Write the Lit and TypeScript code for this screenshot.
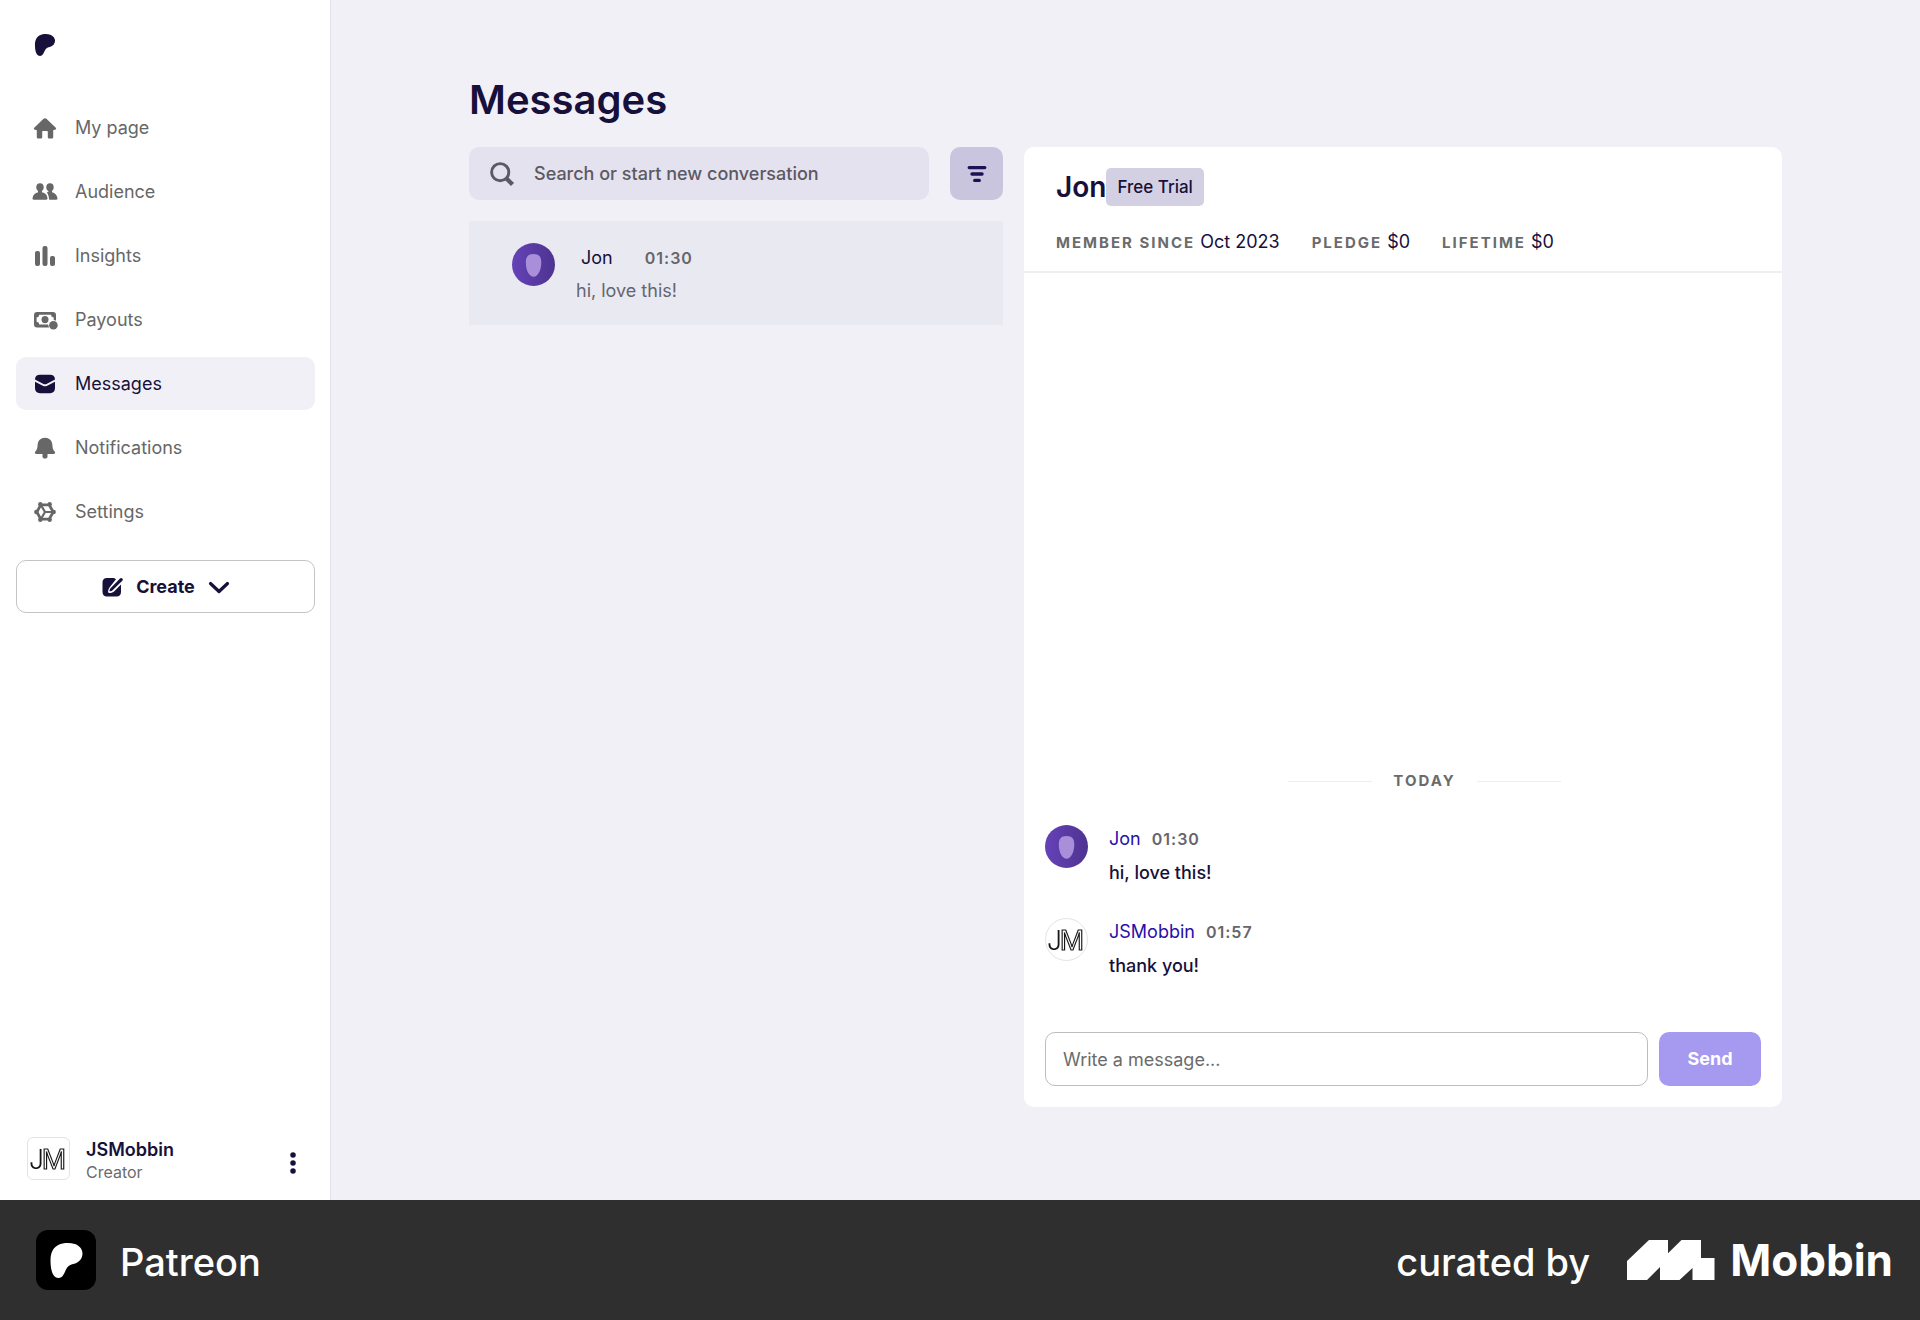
import { LitElement, html, css, svg } from "lit";
import { customElement, property } from "lit/decorators.js";
import { classMap } from "lit/directives/class-map.js";

const PATREON_MARK =
  "M22.957 7.21c-.004-3.064-2.391-5.576-5.191-6.482-3.478-1.125-8.064-.962-11.384.604C2.357 3.231 1.093 7.391 1.046 11.54c-.039 3.411.302 12.396 5.369 12.46 3.765.047 4.326-4.804 6.068-7.141 1.24-1.662 2.836-2.132 4.801-2.618 3.376-.836 5.678-3.501 5.673-7.031Z";

const icons = {
  home: svg`<path d="M12 2.200c.6 0 1.200.3 1.700.7l9.100 8.900c.6.6.4 1.500-.3 1.800l-2.300.7v6.600c0 1-.7 1.600-1.600 1.600h-2.300c-.9 0-1.500-.6-1.500-1.600v-5c0-.6-.4-1-1-1h-3.600c-.6 0-1 .4-1 1v5c0 1-.6 1.600-1.500 1.600H5.400c-.9 0-1.600-.6-1.600-1.600v-6.600l-2.300-.7c-.7-.3-.9-1.200-.3-1.800l9.100-8.900c.5-.4 1.100-.7 1.700-.7Z"/>`,
  audience: svg`<ellipse cx="7" cy="7.300" rx="3.700" ry="4"/><path d="M5 10h4v3H5zM-.5 18.600c.3-3.700 2.600-5.600 5.700-6.300h3.600c3.200.7 5.500 2.600 5.700 6.300 0 .7-.4 1.200-1.100 1.200H.6c-.7 0-1.100-.5-1.100-1.200Z"/><ellipse cx="17" cy="7.300" rx="3.700" ry="4"/><path d="M14 12.400c0-.5 1-.4 1.500-1l.5-2h3v2.900c3 .8 5.200 3 5.500 6.300 0 .7-.4 1.200-1.100 1.200h-6.700c-.6 0-.8-.3-.7-.8-.1-3.600-1.200-4.700-2-6.600Z"/>`,
  insights: svg`<rect x="2" y="7" width="5" height="15" rx="2"/><rect x="9.500" y="2" width="5" height="20" rx="2"/><rect x="17" y="12" width="5" height="10" rx="2"/>`,
  payouts: svg`<path fill-rule="evenodd" d="M4 4h16a3 3 0 0 1 3 3v5.700a5 5 0 0 0-2.300-.8V9.500A3 3 0 0 1 18 6.700H6.300a3 3 0 0 1-2.700 2.800v4.200a3 3 0 0 1 2.700 2.800h8.900a5 5 0 0 0 1 3H4a3 3 0 0 1-3-3V7a3 3 0 0 1 3-3Z"/><ellipse cx="12" cy="11.600" rx="3.500" ry="3.700"/><circle cx="20.400" cy="17.300" r="4.300"/>`,
  messages: svg`<path d="M7 2.800h10c3.300 0 5 1.700 5 4.700l-8.500 4.400c-1 .5-2 .5-3 0L2 7.500c0-3 1.700-4.700 5-4.700Z"/><path d="m2 9.700 7.800 4c1.500.8 2.900.8 4.400 0l7.800-4V16c0 3.300-1.700 5.200-5 5.200H7c-3.300 0-5-1.900-5-5.200Z"/>`,
  bell: svg`<path d="M12 1.800c4.300 0 7.200 3 7.400 7.200.1 3 .6 4.600 2.300 6.600.8 1 .3 2.500-1.100 2.500h-6.100v2.300c0 1.300-1 2.100-2.500 2.100s-2.500-.8-2.500-2.100v-2.300H3.400c-1.400 0-1.900-1.500-1.100-2.500 1.700-2 2.200-3.600 2.300-6.600.2-4.200 3.100-7.200 7.400-7.200Z"/>`,
  settings: svg`<path d="M7.800 4.900h8.400L20.200 12l-4 7.100H7.800L3.800 12Z" fill="none" stroke="currentColor" stroke-width="2.800"/><g><circle cx="20.700" cy="12" r="2.200"/><circle cx="3.300" cy="12" r="2.200"/><circle cx="16.700" cy="4.300" r="2.200"/><circle cx="7.300" cy="4.300" r="2.200"/><circle cx="16.700" cy="19.700" r="2.200"/><circle cx="7.300" cy="19.700" r="2.200"/></g><path d="M12 12h7M12 12 8.500 6M12 12l-3.500 6" fill="none" stroke="currentColor" stroke-width="2.200"/>`,
  compose: svg`<path d="M14 3H7Q2.500 3 2.500 7.500v9.300Q2.500 21.500 7 21.500h9.500q4.500 0 4.500-4.700V9.500l-6.700 6.800c-1 1-3 1.800-4.700 1.800-1.200 0-1.600-.8-1.500-1.800.2-1.800.900-3.400 2-4.500L16 4.200Z"/><path d="M9.500 16.300c-.1-1.500.5-2.600 1.500-3.600L20 3.400c.7-.7 1.600-.7 2.300 0s.7 1.600 0 2.300l-9.200 9.100c-1 1-2.100 1.500-3.600 1.500Z"/>`,
  chevron: svg`<path d="m3.500 8.500 8.500 8 8.500-8" fill="none" stroke="currentColor" stroke-width="3.200" stroke-linecap="round" stroke-linejoin="round"/>`,
  search: svg`<circle cx="10.200" cy="10.200" r="8.600" fill="none" stroke="currentColor" stroke-width="2.900"/><path d="m16 16 6.500 6.500" fill="none" stroke="currentColor" stroke-width="4.400"/>`,
  filter: svg`<path d="M3.500 5h17M6.500 12h11M9.500 19h5" fill="none" stroke="currentColor" stroke-width="3.600" stroke-linecap="round"/>`,
  dots: svg`<circle cx="12" cy="3.300" r="3"/><circle cx="12" cy="12" r="3"/><circle cx="12" cy="20.700" r="3"/>`,
  patreon: svg`<path d=${PATREON_MARK}/>`,
};

type IconName = keyof typeof icons;

@customElement("ui-icon")
export class UiIcon extends LitElement {
  @property() name: IconName = "home";

  static styles = css`
    :host {
      display: inline-flex;
      flex: none;
      width: 24px;
      height: 24px;
    }
    .glyph {
      width: 100%;
      height: 100%;
      fill: currentColor;
      overflow: visible;
    }
  `;

  render() {
    return html`<svg class="glyph" viewBox="0 0 24 24" aria-hidden="true">${icons[this.name]}</svg>`;
  }
}

@customElement("user-avatar")
export class UserAvatar extends LitElement {
  @property() kind: "member" | "creator" = "member";
  @property({ type: Boolean }) square = false;

  static styles = css`
    :host {
      display: block;
      flex: none;
      width: 43px;
      height: 43px;
    }
    .frame {
      box-sizing: border-box;
      width: 100%;
      height: 100%;
      overflow: hidden;
      border-radius: 50%;
    }
    .member {
      background: linear-gradient(90deg, #6542b8, #4e3390);
    }
    .creator {
      background: #fff;
      border: 1px solid #e3e3e6;
    }
    .square {
      border-radius: 6px;
    }
    .art {
      display: block;
      width: 100%;
      height: 100%;
      will-change: transform;
    }
    .j {
      font: 300 27px "Inter", sans-serif;
      fill: #161616;
    }
    .m {
      font: 400 30px "Liberation Sans Narrow", "Liberation Sans", sans-serif;
      fill: #fff;
      stroke: #161616;
      stroke-width: 1.2;
    }
  `;

  render() {
    const frame = { frame: true, [this.kind]: true, square: this.square };
    return html`<div class=${classMap(frame)}>
      <svg class="art" viewBox="0 0 42 42" aria-hidden="true">
        ${this.kind === "member"
          ? svg`<path fill="#a98fd9" d="M21 10.800c5.500 0 7.600 2.700 7.600 8.200 0 7-3 13.900-7.400 13.900-4.500 0-7.700-6.300-7.700-13.600 0-5.300 2-8.500 7.500-8.500Z"/>`
          : svg`<text class="j" x="1" y="31.500">J</text><text class="m" x="14" y="31.500">M</text>`}
      </svg>
    </div>`;
  }
}

interface NavItem {
  label: string;
  icon: IconName;
  active?: boolean;
}

interface ChatMessage {
  author: string;
  kind: "member" | "creator";
  time: string;
  text: string;
}

const NAV: NavItem[] = [
  { label: "My page", icon: "home" },
  { label: "Audience", icon: "audience" },
  { label: "Insights", icon: "insights" },
  { label: "Payouts", icon: "payouts" },
  { label: "Messages", icon: "messages", active: true },
  { label: "Notifications", icon: "bell" },
  { label: "Settings", icon: "settings" },
];

const FACTS = [
  { label: "MEMBER SINCE", value: "Oct 2023" },
  { label: "PLEDGE", value: "$0" },
  { label: "LIFETIME", value: "$0" },
];

const THREAD: ChatMessage[] = [
  { author: "Jon", kind: "member", time: "01:30", text: "hi, love this!" },
  { author: "JSMobbin", kind: "creator", time: "01:57", text: "thank you!" },
];

@customElement("app-root")
export class AppRoot extends LitElement {
  static styles = css`
    :host {
      display: grid;
      grid-template-rows: 1fr 120px;
      min-height: 100vh;
      font-family: "Inter", "Liberation Sans", sans-serif;
      font-size: 18px;
      line-height: 24px;
      color: #17103a;
    }
    * {
      box-sizing: border-box;
    }
    h1,
    h2,
    p,
    ul,
    dl,
    dd,
    ol {
      margin: 0;
      padding: 0;
      list-style: none;
    }
    button,
    input {
      font: inherit;
      color: inherit;
    }
    button {
      cursor: pointer;
    }
    a {
      color: inherit;
      text-decoration: none;
    }
    .shell {
      display: grid;
      grid-template-columns: 331px 1fr;
      background: #f1f0f7;
    }
    .sidebar {
      display: flex;
      flex-direction: column;
      padding: 34px 15px 18px 16px;
      background: #fff;
      border-right: 1px solid #e4e2ec;
    }
    .home-link {
      display: flex;
      margin-left: 18px;
    }
    .home-link ui-icon {
      width: 22px;
      height: 22px;
    }
    .nav {
      display: flex;
      flex-direction: column;
      gap: 11px;
      margin-top: 45px;
    }
    .nav-link {
      display: flex;
      align-items: center;
      gap: 18px;
      height: 53px;
      padding: 0 17px;
      border-radius: 10px;
      color: #676767;
    }
    .nav-link.active {
      background: #f1f0f7;
      color: #17103a;
    }
    .create {
      display: flex;
      align-items: center;
      justify-content: center;
      gap: 12px;
      height: 53px;
      margin-top: 22px;
      border: 1px solid #c4c4c8;
      border-radius: 10px;
      background: #fff;
      font-weight: 700;
    }
    .account {
      display: flex;
      align-items: flex-start;
      gap: 16px;
      margin-top: auto;
      padding: 0 11px;
    }
    .account-text {
      flex: 1;
      padding-top: 1px;
    }
    .account-name {
      font-weight: 600;
      line-height: 24px;
    }
    .account-role {
      font-size: 16px;
      line-height: 20px;
      color: #6b6b6b;
    }
    .more {
      display: flex;
      padding: 15px 0 0;
      border: 0;
      background: none;
    }
    .more ui-icon {
      width: 22px;
      height: 22px;
    }
    .page {
      display: flex;
      flex-direction: column;
      width: calc(100% - 48px);
      max-width: 1313px;
      margin: 0 auto;
      padding: 72px 0 93px;
    }
    .title {
      margin-bottom: 19px;
      font-size: 40px;
      line-height: 56px;
      font-weight: 600;
    }
    .columns {
      display: grid;
      flex: 1;
      grid-template-columns: 534fr 758fr;
      gap: 21px;
    }
    .tools {
      display: flex;
      gap: 21px;
    }
    .search {
      display: flex;
      flex: 1;
      align-items: center;
      gap: 20px;
      height: 53px;
      padding: 0 21px;
      border-radius: 10px;
      background: #e4e2ee;
      color: #5b5963;
    }
    .search-input {
      flex: 1;
      min-width: 0;
      padding: 0;
      border: 0;
      outline: 0;
      background: none;
      font-weight: 500;
    }
    .search-input::placeholder,
    .composer-input::placeholder {
      color: inherit;
      opacity: 1;
    }
    .filter {
      display: flex;
      align-items: center;
      justify-content: center;
      width: 53px;
      height: 53px;
      padding: 0;
      border: 0;
      border-radius: 10px;
      background: #cac5de;
      color: #1d1154;
    }
    .filter ui-icon {
      width: 22px;
      height: 22px;
    }
    .conversation {
      display: flex;
      gap: 21px;
      margin-top: 21px;
      padding: 22px 43px;
      height: 104px;
      background: #e9e9f2;
    }
    .conversation-body {
      display: flex;
      flex-direction: column;
      gap: 9px;
      padding-top: 3px;
    }
    .conversation-head {
      display: flex;
      align-items: center;
      gap: 32px;
      padding-left: 5px;
    }
    .preview {
      color: #66656d;
    }
    .time {
      font-size: 16px;
      font-weight: 600;
      letter-spacing: 1px;
      color: #66656a;
    }
    .card {
      display: flex;
      flex-direction: column;
      border-radius: 10px;
      background: #fff;
    }
    .card-head {
      padding: 21px 32px 16px;
      border-bottom: 2px solid #eeeef2;
    }
    .person {
      display: flex;
      align-items: center;
      height: 38px;
      font-size: 28px;
      line-height: 38px;
      font-weight: 600;
    }
    .badge {
      padding: 7px 11px;
      border-radius: 5px;
      background: #d4d0e3;
      font-size: 17px;
      line-height: 24px;
      font-weight: 500;
    }
    .facts {
      display: flex;
      flex-wrap: wrap;
      gap: 32px;
      margin-top: 24px;
    }
    .fact {
      display: flex;
      align-items: baseline;
      gap: 5px;
    }
    .label {
      font-size: 15px;
      font-weight: 700;
      letter-spacing: 2px;
      color: #6b6b6b;
    }
    .thread {
      display: flex;
      flex: 1;
      flex-direction: column;
      justify-content: flex-end;
      padding: 0 21px 54px;
    }
    .day {
      display: flex;
      align-items: center;
      justify-content: center;
      gap: 21px;
      padding-left: 43px;
      margin-bottom: 32px;
    }
    .rule {
      width: 84px;
      height: 1px;
      background: #eeedf3;
    }
    .messages {
      display: flex;
      flex-direction: column;
      gap: 33px;
    }
    .message {
      display: flex;
      gap: 21px;
    }
    .message-head {
      display: flex;
      align-items: center;
      gap: 11px;
      height: 28px;
      margin-bottom: 8px;
    }
    .author {
      color: #2a0fa8;
    }
    .message-text {
      font-weight: 500;
    }
    .composer {
      display: flex;
      gap: 11px;
      padding: 0 21px 21px;
    }
    .composer-input {
      flex: 1;
      min-width: 0;
      height: 54px;
      padding: 0 17px;
      border: 1px solid #bdbdbf;
      border-radius: 10px;
      background: #fff;
      color: #6b6b6b;
    }
    .send {
      width: 102px;
      height: 54px;
      padding: 0;
      border: 0;
      border-radius: 10px;
      background: #a59af0;
      color: #fff;
      font-weight: 700;
    }
    .footer {
      display: flex;
      align-items: center;
      justify-content: space-between;
      padding: 0 27px 0 36px;
      background: #2f2f2f;
      color: #fff;
      font-size: 38px;
      line-height: 48px;
      font-weight: 500;
    }
    .brand,
    .credit {
      display: flex;
      align-items: center;
    }
    .brand {
      gap: 24px;
    }
    .caption {
      padding-top: 4px;
    }
    .tile {
      display: flex;
      align-items: center;
      justify-content: center;
      width: 60px;
      height: 60px;
      border-radius: 12px;
      background: #000;
    }
    .tile ui-icon {
      width: 35px;
      height: 35px;
    }
    .credit-mark {
      width: 88px;
      height: 40px;
      margin: 0 15px 0 37px;
      fill: #fff;
    }
    .credit-name {
      font-size: 44px;
      font-weight: 700;
    }
  `;

  private renderSidebar() {
    return html`<aside class="sidebar">
      <a class="home-link" href="#home" aria-label="Home"><ui-icon name="patreon"></ui-icon></a>
      <nav class="nav" aria-label="Main">
        ${NAV.map(
          (item) => html`<a
            class=${classMap({ "nav-link": true, active: !!item.active })}
            href="#${item.label.toLowerCase().replace(" ", "-")}"
            ><ui-icon name=${item.icon}></ui-icon>${item.label}</a
          >`
        )}
      </nav>
      <button class="create" type="button">
        <ui-icon name="compose"></ui-icon>Create<ui-icon name="chevron"></ui-icon>
      </button>
      <div class="account">
        <user-avatar kind="creator" square></user-avatar>
        <div class="account-text">
          <p class="account-name">JSMobbin</p>
          <p class="account-role">Creator</p>
        </div>
        <button class="more" type="button" aria-label="Account menu">
          <ui-icon name="dots"></ui-icon>
        </button>
      </div>
    </aside>`;
  }

  private renderInbox() {
    return html`<section class="inbox">
      <div class="tools">
        <label class="search">
          <ui-icon name="search"></ui-icon>
          <input
            class="search-input"
            type="text"
            aria-label="Search conversations"
            placeholder="Search or start new conversation"
          />
        </label>
        <button class="filter" type="button" aria-label="Filter">
          <ui-icon name="filter"></ui-icon>
        </button>
      </div>
      <a class="conversation" href="#jon">
        <user-avatar></user-avatar>
        <div class="conversation-body">
          <div class="conversation-head"><span>Jon</span><span class="time">01:30</span></div>
          <p class="preview">hi, love this!</p>
        </div>
      </a>
    </section>`;
  }

  private renderMessage(message: ChatMessage) {
    return html`<li class="message">
      <user-avatar kind=${message.kind}></user-avatar>
      <div class="message-body">
        <div class="message-head">
          <a class="author" href="#${message.author.toLowerCase()}">${message.author}</a>
          <span class="time">${message.time}</span>
        </div>
        <p class="message-text">${message.text}</p>
      </div>
    </li>`;
  }

  private renderChat() {
    return html`<section class="card">
      <header class="card-head">
        <div class="person">
          <h2 class="person">Jon</h2>
          <span class="badge">Free Trial</span>
        </div>
        <div class="facts">
          ${FACTS.map(
            (fact) => html`<div class="fact">
              <span class="label">${fact.label}</span><span>${fact.value}</span>
            </div>`
          )}
        </div>
      </header>
      <div class="thread">
        <div class="day">
          <span class="rule"></span><span class="label">TODAY</span><span class="rule"></span>
        </div>
        <ol class="messages">
          ${THREAD.map((message) => this.renderMessage(message))}
        </ol>
      </div>
      <form class="composer" @submit=${(event: Event) => event.preventDefault()}>
        <input
          class="composer-input"
          type="text"
          aria-label="Message"
          placeholder="Write a message..."
        />
        <button class="send" type="submit">Send</button>
      </form>
    </section>`;
  }

  render() {
    return html`
      <div class="shell">
        ${this.renderSidebar()}
        <main class="page">
          <h1 class="title">Messages</h1>
          <div class="columns">${this.renderInbox()} ${this.renderChat()}</div>
        </main>
      </div>
      <footer class="footer">
        <div class="brand">
          <span class="tile"><ui-icon name="patreon"></ui-icon></span>
          <span class="caption">Patreon</span>
        </div>
        <div class="credit">
          <span class="caption">curated by</span>
          <svg class="credit-mark" viewBox="0 0 88 40" aria-hidden="true">
            <path d="M0 21 22 0h19v13.300L54.500 0h19.500v18h13.500v22H65.500V28L52.500 40H33V27L20 40H0Z" />
          </svg>
          <span class="credit-name">Mobbin</span>
        </div>
      </footer>
    `;
  }
}
